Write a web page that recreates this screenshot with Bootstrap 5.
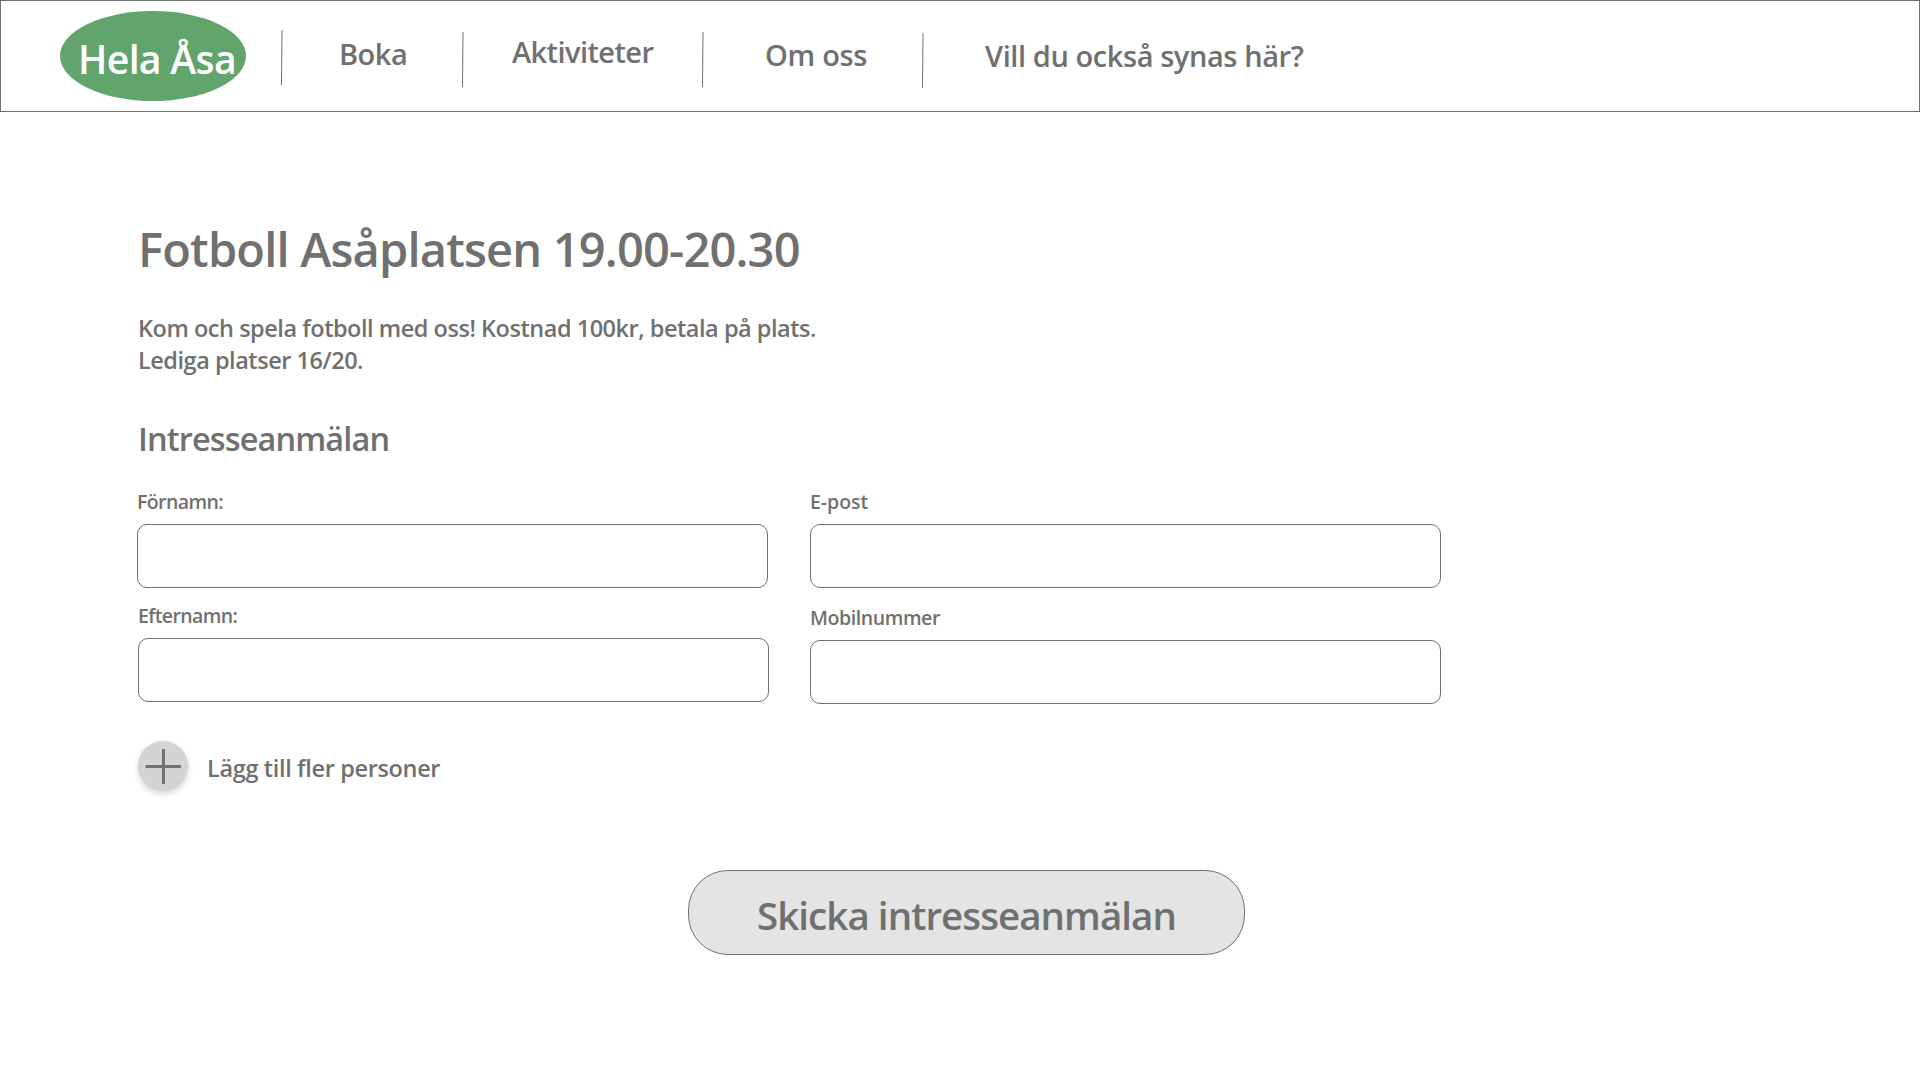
<!DOCTYPE html>
<html lang="sv">
<head>
<meta charset="utf-8">
<meta name="viewport" content="width=device-width, initial-scale=1">
<title>Hela Åsa</title>
<link href="https://cdn.jsdelivr.net/npm/bootstrap@5.3.0/dist/css/bootstrap.min.css" rel="stylesheet">
<style>
  :root { --ink: #707070; }
  body { font-family: "Open Sans", "Noto Sans", sans-serif; font-weight: 600; color: var(--ink); background: #fff; }

  .site-bar { height: 112px; border: 1px solid var(--ink); }
  .brand-oval { width: 186px; height: 90px; margin: 10px 35px 0 59px; padding: 21px 0 0 18px; border-radius: 50%; background: #61a56d; font-size: 39.2px; letter-spacing: -.7px; line-height: 54px; white-space: nowrap; }
  .site-bar .nav-link { padding: 0; font-size: 29px; line-height: 40px; color: var(--ink); white-space: nowrap; }
  .divider { width: 2px; height: 55px; flex: none; margin-top: 31px; }
  .divider-first { margin-top: 29px; }
  .divider-last { margin-top: 32px; }
  .site-bar .link-boka { width: 179px; padding: 33px 0 0 56px; letter-spacing: -.5px; }
  .site-bar .link-akt { width: 238px; padding: 31px 0 0 48px; letter-spacing: -.58px; }
  .site-bar .link-om { width: 218px; padding: 34px 0 0 61px; letter-spacing: -.3px; }
  .site-bar .link-syns { padding: 35px 0 0 61px; letter-spacing: -.42px; }

  .page { padding: 107px 0 0 137px; }
  .page h1 { font-size: 47px; font-weight: 600; line-height: 60px; letter-spacing: -.81px; margin: 0 0 33px 1px; }
  .intro { font-size: 23.5px; line-height: 32px; letter-spacing: -.47px; margin: 0 0 41px 1px; }
  .page h2 { font-size: 32.5px; font-weight: 600; line-height: 44px; letter-spacing: -.88px; margin: 0 0 28px 1px; }
  .fields { gap: 41px; height: 252px; }
  .field-col { width: 632px; }
  .fields .form-label { display: block; font-size: 19.5px; line-height: 26px; letter-spacing: -.6px; margin: 0 0 9px; }
  .fields .label-epost { letter-spacing: -.05px; }
  .fields .label-mobil { letter-spacing: -.42px; }
  .fields .form-control { width: 631px; height: 64px; border: 1px solid var(--ink); border-radius: 10px; }
  .field-gap { margin-top: 15px; }
  .nudge-start { padding-left: 1px; }
  .nudge-top { padding-top: 2px; }
  .add-btn { width: 50px; height: 50px; border-radius: 50%; background: #d5d3d4; box-shadow: 0 3px 6px rgba(0,0,0,.16); }
  .add-text { font-size: 23.5px; line-height: 32px; letter-spacing: -.35px; margin: 4px 0 0 19px; }
  .send-btn { width: 557px; height: 85px; margin: 79px 0 0 551px; padding: 4px 0 0; border: 1px solid var(--ink); border-radius: 40px; background: #e4e4e4; color: var(--ink); font-size: 38.5px; font-weight: 600; line-height: 50px; letter-spacing: -.94px; }
</style>
</head>
<body>
<header class="site-bar">
  <nav class="d-flex align-items-start">
    <a class="brand-oval text-white text-decoration-none" href="#">Hela Åsa</a>
    <svg class="divider divider-first" viewBox="0 0 2 55"><path d="M1 0L.5 55" stroke="#707070"/></svg>
    <a class="nav-link link-boka" href="#">Boka</a>
    <svg class="divider" viewBox="0 0 2 55"><path d="M1 0L.5 55" stroke="#707070"/></svg>
    <a class="nav-link link-akt" href="#">Aktiviteter</a>
    <svg class="divider" viewBox="0 0 2 55"><path d="M1 0L.5 55" stroke="#707070"/></svg>
    <a class="nav-link link-om" href="#">Om oss</a>
    <svg class="divider divider-last" viewBox="0 0 2 55"><path d="M1 0L.5 55" stroke="#707070"/></svg>
    <a class="nav-link link-syns" href="#">Vill du också synas här?</a>
  </nav>
</header>
<main class="page">
  <h1>Fotboll Asåplatsen 19.00-20.30</h1>
  <p class="intro">Kom och spela fotboll med oss! Kostnad 100kr, betala på plats.<br>Lediga platser 16/20.</p>
  <h2>Intresseanmälan</h2>
  <form>
    <div class="fields d-flex">
      <div class="field-col">
        <label class="form-label" for="fornamn">Förnamn:</label>
        <input class="form-control" id="fornamn" type="text">
        <div class="field-gap nudge-start">
          <label class="form-label" for="efternamn">Efternamn:</label>
          <input class="form-control" id="efternamn" type="text">
        </div>
      </div>
      <div class="field-col">
        <label class="form-label label-epost" for="epost">E-post</label>
        <input class="form-control" id="epost" type="email">
        <div class="field-gap nudge-top">
          <label class="form-label label-mobil" for="mobil">Mobilnummer</label>
          <input class="form-control" id="mobil" type="tel">
        </div>
      </div>
    </div>
    <div class="d-flex align-items-center nudge-start">
      <button class="add-btn btn p-0 border-0 d-flex" type="button" aria-label="Lägg till">
        <svg width="50" height="50" viewBox="0 0 50 50"><path d="M7.5 25.5H43M25.5 8v35" stroke="#707070" stroke-width="3"/></svg>
      </button>
      <span class="add-text">Lägg till fler personer</span>
    </div>
    <button class="btn send-btn" type="button">Skicka intresseanmälan</button>
  </form>
</main>
<script src="https://cdn.jsdelivr.net/npm/bootstrap@5.3.0/dist/js/bootstrap.bundle.min.js"></script>
</body>
</html>
